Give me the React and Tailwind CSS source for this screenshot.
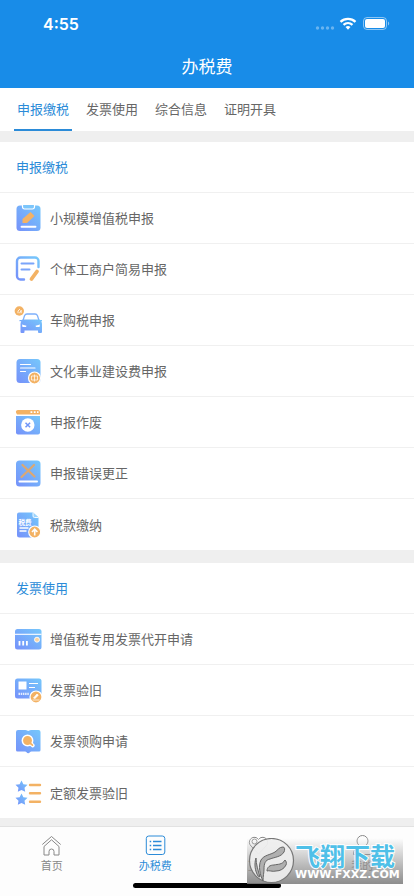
import { useState } from "react";

const TABS = ["申报缴税", "发票使用", "综合信息", "证明开具"];

const BLUE = "url(#blue)";
const ORANGE = "#F3B264";

const ClipboardIcon = () => (
  <>
    <rect x="2.500" y="1.500" width="24" height="25.500" rx="3.500" fill={BLUE} />
    <path d="M8.500.5h12v2.500a2 2 0 0 1-2 2h-8a2 2 0 0 1-2-2z" fill="#7CC6FB" stroke="#fff" strokeWidth="1.200" />
    <path d="M8.500 19v-4l8-7 4 4-7.500 7z" fill={ORANGE} />
    <path d="M7.500 22.800h14" stroke="#fff" strokeWidth="1.900" strokeLinecap="round" />
  </>
);

const NoteIcon = () => (
  <>
    <path
      d="M24.500 12V6a3.500 3.500 0 0 0-3.500-3.500H6.500A3.500 3.500 0 0 0 3 6v15a3.500 3.500 0 0 0 3.500 3.500H10"
      fill="none" stroke={BLUE} strokeWidth="2.400" strokeLinecap="round"
    />
    <path d="M7.500 8.500h12M7.500 14.500h8" stroke="#7AA4FA" strokeWidth="2" strokeLinecap="round" />
    <path d="M17.500 24l5.500-7.500" stroke={ORANGE} strokeWidth="3.800" strokeLinecap="round" />
  </>
);

const CarIcon = () => (
  <>
    <path d="M8.500 16l2-6.200C11 8.600 11.700 8 13 8h8c1.300 0 2 .6 2.500 1.800l2 6.200" fill="none" stroke="#7DB0FB" strokeWidth="1.300" />
    <path
      d="M5.500 14h2l1.500-.500h16l1.500.500h2v1.300h-1.300c.5.700.8 1.500.8 2.700v8a1 1 0 0 1-1 1h-2a1 1 0 0 1-1-1v-1.500H10.500V26a1 1 0 0 1-1 1h-2a1 1 0 0 1-1-1v-8c0-1.200.3-2 .8-2.700H5.500z"
      fill={BLUE}
    />
    <path d="M8 18.500l4.500 1.200-.5 1.300H8.500zM26 18.500l-4.500 1.200.5 1.300h3.500z" fill="#fff" />
    <circle cx="5.300" cy="5" r="4.700" fill={ORANGE} />
    <path d="M4 7.200V5l2-2M5.500 7.200l1.700-3v3" fill="none" stroke="#fff" strokeWidth=".8" />
  </>
);

const CultureIcon = () => (
  <>
    <rect x="2.500" y="2" width="24" height="24" rx="3.500" fill={BLUE} />
    <path d="M6.500 7.500h10M6.500 11h14.500M6.500 14.500h5" stroke="#fff" strokeWidth="1.200" strokeLinecap="round" />
    <circle cx="20.500" cy="21" r="6" fill={ORANGE} stroke="#fff" strokeWidth="1.200" />
    <path d="M17.500 19h6v4h-6zM20.500 17.500v7" fill="none" stroke="#fff" strokeWidth=".7" />
  </>
);

const VoidIcon = () => (
  <>
    <path d="M4.500 2H24a2 2 0 0 1 2 2v2.500H3l-1-2A2 2 0 0 1 4.500 2z" fill={ORANGE} />
    <path d="M16.500 4.200h1.800M19.800 4.200h1.800M23 4.200h1.500" stroke="#fff" strokeWidth="1.800" />
    <path d="M2 8h24v16.500a2 2 0 0 1-2 2H4a2 2 0 0 1-2-2z" fill={BLUE} />
    <circle cx="13.800" cy="17" r="6.700" fill="#fff" />
    <path d="M11.500 14.700l4.600 4.600M16.100 14.700l-4.600 4.600" stroke="#7196F8" strokeWidth="1.500" />
  </>
);

const CorrectIcon = () => (
  <>
    <rect x="2" y="1.500" width="24.500" height="26" rx="3.500" fill={BLUE} />
    <path d="M8.500 6l12 11.500M20 6L7.500 18" stroke="#DBA873" strokeWidth="2.200" strokeLinecap="round" />
    <path d="M5.500 22.500h17.500" stroke="#fff" strokeWidth="2" strokeLinecap="round" />
  </>
);

const PayIcon = () => (
  <>
    <path d="M5 1.500h14l5.500 5V24a2.500 2.500 0 0 1-2.500 2.500H5.500A2.500 2.500 0 0 1 3 24V3.500a2 2 0 0 1 2-2z" fill={BLUE} />
    <path d="M19 1.500V5a1.500 1.500 0 0 0 1.500 1.500h4" fill="#9ED4FC" stroke="#fff" strokeWidth=".9" />
    <text x="4.500" y="13.500" fontSize="6.500" fontWeight="700" fill="#fff">税费</text>
    <path d="M5.500 17h9M5.500 20h7" stroke="#fff" strokeWidth="1.300" />
    <circle cx="20.700" cy="21" r="6" fill={ORANGE} stroke="#fff" strokeWidth="1.100" />
    <path d="M20.700 24.500v-6M18 21l2.700-2.800 2.700 2.800" fill="none" stroke="#fff" strokeWidth="1.600" />
  </>
);

const CardIcon = () => (
  <>
    <rect x="1" y="4" width="26.500" height="20.500" rx="2.500" fill={BLUE} />
    <path d="M1 9.300h26.500" stroke="#fff" strokeWidth="1.100" />
    <path d="M5.500 16v4.500M9.200 16v4.500M12.900 16v4.500" stroke="#fff" strokeWidth="1.800" />
    <circle cx="23" cy="14.700" r="2.500" fill="#F9D3A0" stroke="#fff" strokeWidth=".9" />
  </>
);

const VerifyIcon = () => (
  <>
    <rect x="1" y="2.500" width="26.500" height="20" rx="2.500" fill={BLUE} />
    <path d="M4.500 5.500h8v8h-8z" fill="#fff" />
    <path d="M15 7.500h9M15 11.500h6" stroke="#fff" strokeWidth="1.100" />
    <path d="M4.500 17.800h11" stroke="#fff" strokeWidth="2.200" strokeDasharray="1.500 .7" strokeOpacity=".8" />
    <circle cx="22" cy="21" r="6" fill={ORANGE} stroke="#fff" strokeWidth="1.200" />
    <path d="M19.500 22l3.500-4 1.300 1.300-3.300 3.200zM18.500 24h7" fill="#fff" stroke="#fff" strokeWidth=".7" />
  </>
);

const BookSearchIcon = () => (
  <>
    <path
      d="M4 3h7.500c1.500 0 2 .9 2.700.9S15.500 3 17 3h7.500A2 2 0 0 1 26.500 5v18a1.500 1.500 0 0 1-1.500 1.500h-7.500c-1.500 0-1.700 1.700-3.300 1.700s-1.700-1.700-3.200-1.700H3.500A1.500 1.500 0 0 1 2 23V5a2 2 0 0 1 2-2z"
      fill={BLUE}
    />
    <path d="M16.500 16.500l2.300 2" stroke="#fff" strokeWidth="3.800" strokeLinecap="round" />
    <circle cx="13.500" cy="13.500" r="5.200" fill={ORANGE} stroke="#fff" strokeWidth="1.500" />
    <path d="M16.500 16.500l2 1.700" stroke={ORANGE} strokeWidth="1.700" strokeLinecap="round" />
  </>
);

const StarListIcon = () => (
  <>
    <path d="M7.500 1.500l1.900 3.700 4.100.6-3 2.900.7 4.100-3.700-1.900-3.700 1.900.7-4.100-3-2.900 4.100-.6z" fill={BLUE} />
    <path d="M7.500 14.500l1.900 3.700 4.100.6-3 2.900.7 4.100-3.700-1.900-3.700 1.900.7-4.100-3-2.900 4.100-.6z" fill={BLUE} />
    <path d="M16 6h10M16 14.300h10M16 22.700h10" stroke={ORANGE} strokeWidth="2.400" strokeLinecap="round" />
  </>
);

const SECTIONS = [
  {
    title: "申报缴税",
    items: [
      { label: "小规模增值税申报", icon: ClipboardIcon },
      { label: "个体工商户简易申报", icon: NoteIcon },
      { label: "车购税申报", icon: CarIcon },
      { label: "文化事业建设费申报", icon: CultureIcon },
      { label: "申报作废", icon: VoidIcon },
      { label: "申报错误更正", icon: CorrectIcon },
      { label: "税款缴纳", icon: PayIcon },
    ],
  },
  {
    title: "发票使用",
    items: [
      { label: "增值税专用发票代开申请", icon: CardIcon },
      { label: "发票验旧", icon: VerifyIcon },
      { label: "发票领购申请", icon: BookSearchIcon },
      { label: "定额发票验旧", icon: StarListIcon },
    ],
  },
];

const NAV = [
  {
    label: "首页",
    icon: <path d="M.8 9.500L10 1.500l9.200 8M2.500 11.500V20h5v-3.500a2.500 2.500 0 0 1 5 0V20h5v-8.500M2.500 11.500L10 4.800l7.500 6.700" />,
  },
  {
    label: "办税费",
    icon: (
      <>
        <rect x=".8" y="1" width="18.500" height="18.500" rx="2.500" />
        <path d="M7.500 6.500h8.500M7.500 10.500h8.500M7.500 14.500h8.500M4.200 6.500h1.500M4.200 10.500h1.500M4.200 14.500h1.500" strokeWidth="1.300" />
      </>
    ),
  },
  {
    label: "互动",
    icon: (
      <>
        <path d="M10 19L2.500 11A5 5 0 1 1 10 4.500 5 5 0 1 1 17.500 11z" />
        <circle cx="6" cy="6.500" r="2.500" />
      </>
    ),
  },
  {
    label: "我的",
    icon: (
      <>
        <circle cx="10" cy="6" r="5.500" />
        <path d="M6.500 10.500C3 12 1 15.500 1 19.500h18c0-4-2-7.500-5.500-9" />
      </>
    ),
  },
];

const StatusBar = () => (
  <div className="flex h-12 items-center justify-between pr-6 pl-[43px]">
    <span className="font-['Inter',sans-serif] text-base font-semibold">4:55</span>
    <svg width="76" height="16" viewBox="0 0 76 16" fill="#fff">
      <g opacity=".35">
        <circle cx="3.500" cy="12" r="1.700" />
        <circle cx="8.500" cy="12" r="1.700" />
        <circle cx="13.500" cy="12" r="1.700" />
        <circle cx="18.500" cy="12" r="1.700" />
      </g>
      <g fill="none" stroke="#fff" strokeWidth="2.300">
        <path d="M26.500 5.800a11 11 0 0 1 15 0" />
        <path d="M29.500 8.900a6.800 6.800 0 0 1 9 0" />
      </g>
      <path d="M34 13.800l-2.500-2.700a3.800 3.800 0 0 1 5 0z" />
      <rect x="49.500" y="1.500" width="23" height="12" rx="3.500" fill="none" stroke="#fff" strokeOpacity=".5" />
      <rect x="51" y="3" width="20" height="9" rx="2" />
      <path d="M74 5.500v4c1.600-.6 1.600-3.400 0-4z" opacity=".5" />
    </svg>
  </div>
);

const Section = ({ title, items }) => (
  <section className="bg-white">
    <h2 className="flex h-[51px] items-center border-b border-[#f0f0f0] px-4 text-[#2b8bd8]">{title}</h2>
    <ul className="divide-y divide-[#f0f0f0]">
      {items.map(({ label, icon: Icon }) => (
        <li key={label} className="h-[51px]">
          <a href="#" className="flex h-full items-center gap-2 px-[14px]">
            <svg width="28" height="28" viewBox="0 0 28 28" className="shrink-0">
              <Icon />
            </svg>
            {label}
          </a>
        </li>
      ))}
    </ul>
  </section>
);

const Watermark = () => (
  <div className="pointer-events-none absolute right-[11px] bottom-3 flex h-[46px] w-[156px] items-center bg-linear-to-b from-white/20 to-[#808080]/90">
    <svg width="48" height="46" viewBox="0 0 48 46" className="shrink-0">
      <circle cx="24.500" cy="22.500" r="22" fill="#eeeeee" fillOpacity=".93" stroke="#777" strokeWidth="1.200" />
      <g fill="#b0b0b0" stroke="#666" strokeWidth="1" strokeLinejoin="round">
        <path d="M16 43c-3-6-5-15-2-21 3-5 9-5 14-8 3-2 4-5 8-5 2 0 2 3 1 5-3 5-9 5-14 7-5 1-6 5-6 10 0 4-1 7-1 12z" />
        <path d="M20 33c0-4 3-6 7-6 4-1 8 0 11-5 1 1 2 3 1 5-2 4-6 6-10 6-4 1-7-1-9 0z" />
        <path d="M11 38C8 33 7 26 9 20c0 6 2 12 4 19z" />
      </g>
    </svg>
    <div className="flex flex-col whitespace-nowrap text-white">
      <span className="h-7 text-[25px] leading-7 font-bold text-[#4fc0e8] [paint-order:stroke] [-webkit-text-stroke:2px_#fff]">
        飞翔下载
      </span>
      <span className="font-['DejaVu_Sans',sans-serif] text-[11px] leading-3 font-bold">WWW.FXXZ.COM</span>
    </div>
  </div>
);

const App = () => {
  const [activeTab, setActiveTab] = useState(TABS[0]);

  return (
    <div className="flex min-h-screen flex-col bg-[#efefef] font-['Noto_Sans_CJK_SC',sans-serif] text-[13px] text-[#666]">
      {/* Gradient shared by the row icons */}
      <svg width="0" height="0" className="absolute">
        <defs>
          <linearGradient id="blue" x1="1" y1="0" x2="0" y2="1">
            <stop offset="0" stopColor="#76C8FB" />
            <stop offset="1" stopColor="#7591FA" />
          </linearGradient>
        </defs>
      </svg>

      <header className="bg-[#188ce8] text-white">
        <StatusBar />
        <h1 className="h-10 text-center text-[17px] leading-9">办税费</h1>
      </header>

      <div className="flex h-[43px] gap-[11px] bg-white px-[14px]">
        {TABS.map((tab) => (
          <button
            key={tab}
            onClick={() => setActiveTab(tab)}
            className={
              tab === activeTab
                ? "border-b-2 border-[#2b8bd8] px-[3px] text-[#2b8bd8]"
                : "border-b-2 border-transparent px-[3px]"
            }
          >
            {tab}
          </button>
        ))}
      </div>

      <main className="flex flex-1 flex-col gap-[13px] pt-[11px] pb-2">
        {SECTIONS.map((section) => (
          <Section key={section.title} {...section} />
        ))}
      </main>

      <footer className="relative bg-[#fdfdfd]">
        <nav className="grid grid-cols-4 border-t border-[#e2e2e2] pt-2">
          {NAV.map(({ label, icon }, i) => (
            <a
              key={label}
              href="#"
              className={
                i === 1
                  ? "flex flex-col items-center text-[#2b8bd8]"
                  : "flex flex-col items-center text-[#888]"
              }
            >
              <svg width="21" height="21" viewBox="0 0 20 21" fill="none" stroke="currentColor" strokeWidth="1">
                {icon}
              </svg>
              <span className="text-[11px] leading-[18px]">{label}</span>
            </a>
          ))}
        </nav>
        <div className="flex justify-center pt-[9px] pb-2">
          <div className="h-[5px] w-[148px] rounded-full bg-black" />
        </div>
        <Watermark />
      </footer>
    </div>
  );
};

export default App;
